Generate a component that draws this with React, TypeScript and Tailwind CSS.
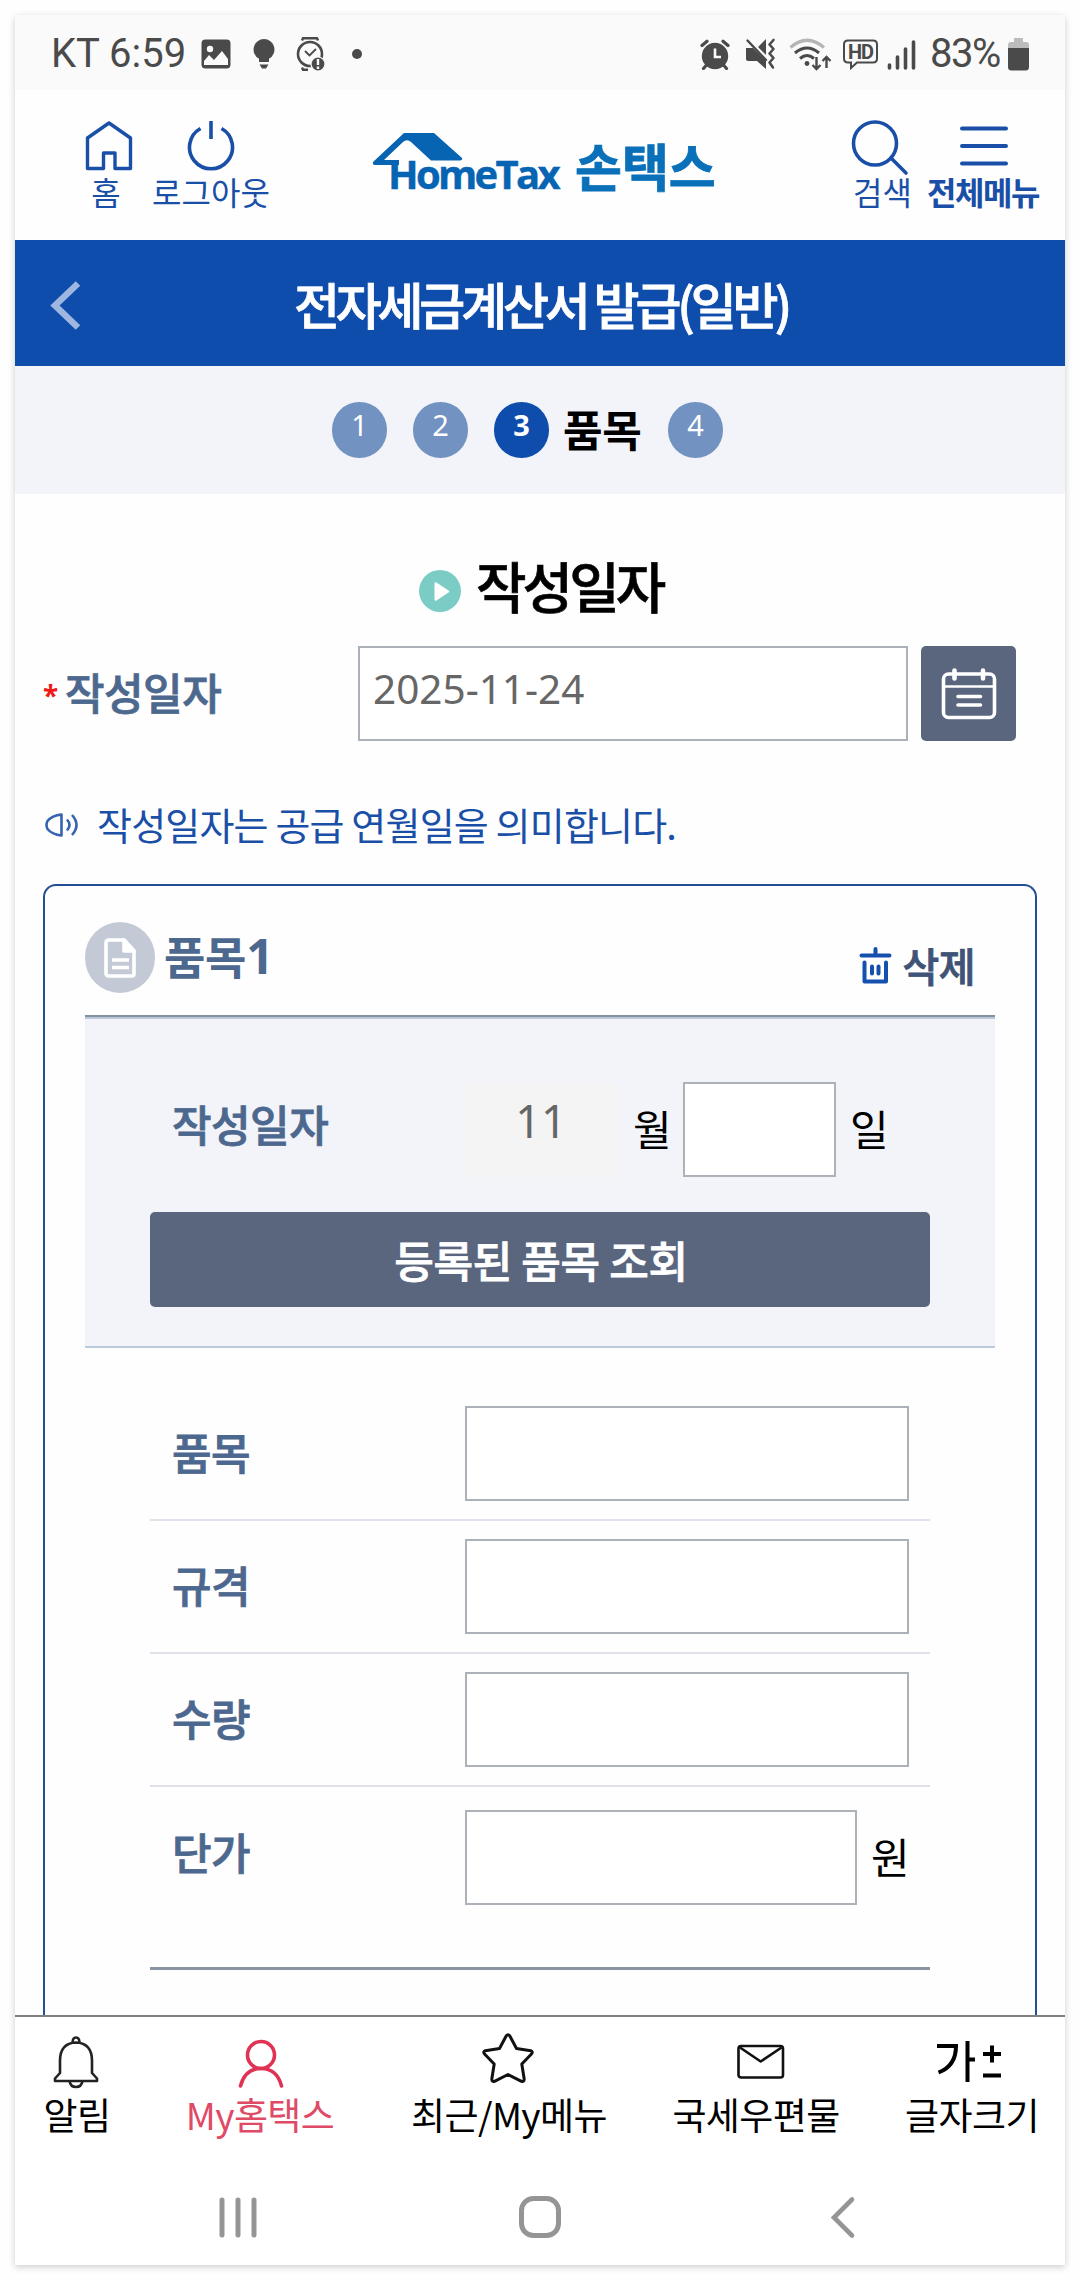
import { useState, type ReactNode } from 'react';

type IconProps = { className?: string };

const STEPS = [1, 2, 3, 4];
const CURRENT_STEP = 3;

function StatusBar() {
  return (
    <div className="flex h-[75px] shrink-0 items-center bg-[#fafafa] pl-[36px] pt-[3px] font-['Roboto',sans-serif] text-[40px] leading-none text-[#4a4a4a]">
      <span className="w-[150px] whitespace-nowrap">KT 6:59</span>
      {/* gallery, tip, watch */}
      <svg className="mr-[22px] h-[30px] w-[30px]" viewBox="0 0 30 30">
        <rect x="0.5" y="0.5" width="29" height="29" rx="4" fill="#4a4a4a" />
        <path d="M3 22l5-6 5 5 8-9 6 8v6H3z" fill="#fafafa" />
        <circle cx="9" cy="10" r="3.2" fill="#fafafa" />
      </svg>
      <svg className="mr-[21px] h-[32px] w-[22px]" viewBox="0 0 22 32" fill="#4a4a4a">
        <path d="M11 1a10.500 10.500 0 0 1 5 19.700V24H6v-3.300A10.500 10.500 0 0 1 11 1zM6.500 26.500h9L13 30.500H9z" />
      </svg>
      <svg className="mr-[26px] h-[34px] w-[30px]" viewBox="0 0 30 34" fill="none" stroke="#4a4a4a" strokeWidth="2.600">
        <circle cx="14" cy="17" r="12" />
        <path d="M9 14l4.500 4.500L20 12" strokeWidth="1.800" />
        <path d="M6 3.500L7 1.200h14l1 2.300M6 30.500l1 2.300h5" strokeWidth="2.400" />
        <circle cx="22" cy="27" r="7" fill="#4a4a4a" stroke="#fafafa" strokeWidth="1.200" />
        <path d="M22 22v6M22 29.500v2.500" stroke="#fafafa" strokeWidth="2.400" />
      </svg>
      <span className="h-[10px] w-[10px] rounded-full bg-[#4a4a4a]" />

      <svg className="ml-auto mr-[15px] h-[31px] w-[30px]" viewBox="0 0 30 31">
        <circle cx="15" cy="17" r="13.200" fill="#4a4a4a" />
        <path d="M2 6.500L7 2.200M28 6.500L23 2.200M6.500 26L3.500 29.500M23.500 26l3 3.500" stroke="#4a4a4a" strokeWidth="3.200" strokeLinecap="round" />
        <path d="M15 9.500V18h6" stroke="#fafafa" strokeWidth="2.600" fill="none" />
      </svg>
      <svg className="mr-[13px] h-[32px] w-[31px]" viewBox="0 0 31 32" fill="#4a4a4a">
        <path d="M1 10h7l13 13v8l-9-8H3q-2 0-2-2zM21 1v16l-8-8z" />
        <path d="M2.500 2.500L21 22" stroke="#4a4a4a" strokeWidth="2.400" strokeLinecap="round" />
        <path d="M28.500 2l-4 4.500 4 4.500-4 4.500 4 4.500-4 4.500 3.500 5" fill="none" stroke="#4a4a4a" strokeWidth="2.600" strokeLinejoin="round" strokeLinecap="round" />
      </svg>
      <svg className="mr-[11px] h-[34px] w-[43px]" viewBox="0 0 43 34" fill="none" strokeWidth="3">
        <path d="M1.500 10.500Q18-4 35 10.500" stroke="#b5b5b5" strokeWidth="3.200" />
        <path d="M6 16q12-10 24 0M11 21.500q7-6 14 0" stroke="#4a4a4a" />
        <circle cx="18" cy="26.500" r="2.400" fill="#4a4a4a" />
        <path d="M27.500 20v12M23.500 28l4 4 4-4M37.500 31V20M33.500 24l4-4 4 4" stroke="#4a4a4a" strokeWidth="2.400" />
      </svg>
      <div className="relative mr-[9px] h-[31px] w-[35px]">
        <svg className="h-[31px] w-[35px]" viewBox="0 0 35 31" fill="none" stroke="#4a4a4a" strokeWidth="2">
          <path d="M5 1.500h25q4 0 4 4v14q0 4-4 4H14l-6 5.500v-5.500H5q-4 0-4-4v-14q0-4 4-4z" />
        </svg>
        <span className="absolute inset-x-0 top-[2px] text-center text-[20px] font-bold leading-[22px] tracking-[-1px]">HD</span>
      </div>
      <svg className="mr-[14px] h-[31px] w-[29px]" viewBox="0 0 29 31" stroke="#4a4a4a" strokeWidth="3.600" strokeLinecap="round">
        <path d="M2.500 26v3M10.500 18v11M18.500 10v19M26.500 3v26" />
      </svg>
      <span className="mr-[6px] w-[72px] whitespace-nowrap tracking-[-1.500px]">83%</span>
      <svg className="mr-[36px] h-[34px] w-[21px]" viewBox="0 0 21 34">
        <path d="M6 1h9v4h3q3 0 3 3v5H0V8q0-3 3-3h3z" fill="#bcbcbc" />
        <path d="M0 11h21v19q0 3.500-3.500 3.500h-14Q0 33.500 0 30z" fill="#4a4a4a" />
      </svg>
    </div>
  );
}

function Header() {
  return (
    <header className="flex h-[150px] shrink-0 pt-[30px] text-[32px] leading-none text-[#1a4fa8]">
      <button className="ml-[65px] flex w-[58px] flex-col items-center">
        <svg className="h-[53px] w-[48px]" viewBox="0 0 48 53" fill="none" stroke="#1a4fa8" strokeWidth="3.400" strokeLinejoin="round">
          <path d="M2.500 18L24 3l21.500 15v30.500H30V33H18.500v15.500h-16z" />
        </svg>
        <span className="mr-[6px] mt-[2px]">홈</span>
      </button>
      <button className="ml-[13px] flex w-[120px] flex-col items-center">
        <svg className="h-[53px] w-[48px]" viewBox="0 0 48 53" fill="none" stroke="#1a4fa8" strokeWidth="3.600">
          <path d="M13.500 8.500a21.500 21.500 0 1 0 21 0M24 1v18" />
        </svg>
        <span className="mt-[2px] whitespace-nowrap">로그아웃</span>
      </button>

      {/* logo */}
      <div className="relative ml-[102px] mt-[12px] h-[66px] w-[344px]">
        <svg className="h-[34px] w-[92px]" viewBox="0 0 92 34">
          <path d="M0 30L31 1h30l28 25q1 2.500-2 2.500H58L38 10q-4-3.500-8 0L11 28h15v5H2q-3 0-2-3z" fill="#0764b2" />
        </svg>
        <span className="absolute left-[15px] top-[22px] font-['Open_Sans','Noto_Sans',sans-serif] text-[40px] font-bold leading-[40px] tracking-[-2.700px] text-[#0764b2] [-webkit-text-stroke:0.4px]">HomeTax</span>
        <span className="absolute left-[202px] top-[6px] whitespace-nowrap text-[51px] font-bold leading-[54px] text-[#0a70b9] [-webkit-text-stroke:0.8px]">손택스</span>
      </div>

      <button className="ml-[133px] flex w-[60px] flex-col items-center">
        <svg className="h-[56px] w-[58px]" viewBox="0 0 58 56" fill="none" stroke="#1a4fa8" strokeWidth="3.600" strokeLinecap="round">
          <circle cx="24" cy="23.500" r="21.500" />
          <path d="M40 38l15 15" />
        </svg>
        <span className="-mt-px ml-[5px] whitespace-nowrap">검색</span>
      </button>
      <button className="ml-[15px] flex w-[116px] flex-col items-center">
        <svg className="ml-[2px] h-[56px] w-[50px]" viewBox="0 0 50 56" stroke="#1a4fa8" strokeWidth="4" strokeLinecap="round">
          <path d="M3 8.500h44M3 26h44M3 43.500h44" />
        </svg>
        <span className="-mt-px whitespace-nowrap font-bold tracking-[-1.500px]">전체메뉴</span>
      </button>
    </header>
  );
}

function StepBar() {
  return (
    <ol className="flex h-[128px] shrink-0 items-center bg-[#f2f4f9] pl-[317px]">
      {STEPS.map((n) => (
        <li key={n} className="mr-[26px] flex items-center">
          <span
            className={`flex h-[56px] w-[55px] items-center justify-center rounded-full pb-[11px] font-['Noto_Sans',sans-serif] text-[29px] leading-none text-white ${n === CURRENT_STEP ? 'bg-[#0e4dac] font-bold' : 'bg-[#7292c2]'}`}
          >
            {n}
          </span>
          {n === CURRENT_STEP && (
            <span className="mb-[4px] ml-[14px] w-[79px] whitespace-nowrap text-[43px] font-bold leading-none tracking-[-0.400px] text-black">품목</span>
          )}
        </li>
      ))}
    </ol>
  );
}

function Field({ label, unit, last }: { label: string; unit?: string; last?: boolean }) {
  const [value, setValue] = useState('');
  return (
    <div className={last ? 'flex h-[183px] items-start border-b-[3px] border-[#8a94a3] pl-[22px] pt-[23px]' : 'flex h-[133px] items-start border-b-2 border-[#dfe2ea] pl-[22px] pt-[18px]'}>
      <span className={`w-[293px] text-[43px] font-medium leading-none tracking-[-0.500px] text-[#4d688e] [-webkit-text-stroke:0.8px] ${last ? 'mt-[20px]' : 'mt-[24px]'}`}>{label}</span>
      <input
        value={value}
        onChange={(e) => setValue(e.target.value)}
        className={`h-[95px] border-2 border-[#adb1b8] bg-white px-3 text-[41px] text-[#666] ${unit ? 'w-[392px]' : 'w-[444px]'}`}
      />
      {unit && <span className="ml-[14px] mt-[25px] text-[42px] leading-none text-black">{unit}</span>}
    </div>
  );
}

function ItemCard() {
  const [day, setDay] = useState('');
  return (
    <section className="mx-[28px] mt-[38px] flex-1 rounded-t-[13px] border-2 border-b-0 border-[#234f93] px-[40px]">
      <div className="flex h-[129px]">
        <span className="mt-[36px] flex h-[71px] w-[70px] items-center justify-center rounded-full bg-[#c4cad5]">
          <svg className="h-[40px] w-[32px]" viewBox="0 0 32 40" fill="none" stroke="white" strokeWidth="3.600" strokeLinejoin="round">
            <path d="M5 2h15l10 11v23q0 2-2 2H5q-3 0-3-2.500v-31Q2 2 5 2z" />
            <path d="M20 2v11h10z" fill="white" />
            <path d="M8 22h17M8 29.500h17" />
          </svg>
        </span>
        <h3 className="ml-[9px] mt-[47px] flex h-[45px] items-center whitespace-nowrap text-[45px] font-bold leading-none tracking-[-0.300px] text-[#4d688e]">
          품목<span className="font-['Noto_Sans',sans-serif] text-[48px] leading-none">1</span>
        </h3>
        <button className="ml-auto mr-[20px] mt-[58px] flex h-[42px] items-center text-[40px] font-medium leading-none tracking-[-0.500px] text-[#3f5376] [-webkit-text-stroke:0.8px]">
          <svg className="mr-[10px] h-[38px] w-[33px]" viewBox="0 0 33 38" fill="none" stroke="#1550ae" strokeWidth="4" strokeLinecap="round" strokeLinejoin="round">
            <path d="M2.500 9.500h28M16.500 3v6M5.500 16.500V35.500h21.500V16.500" />
            <path d="M13 20.500v7M19.500 20.500v7" />
          </svg>
          삭제
        </button>
      </div>

      <div className="border-t-2 border-[#84919f]">
        <div className="h-[331px] border-y-2 border-[#bac9dc] bg-[#f2f4fa] px-[65px]">
          <div className="flex h-[193px] items-start pl-[22px] pt-[63px]">
            <span className="mt-[20px] w-[293px] text-[43px] font-medium leading-none tracking-[-0.500px] text-[#4d688e] [-webkit-text-stroke:0.8px]">작성일자</span>
            <span className="flex h-[95px] w-[152px] items-center justify-center bg-[#f4f4f4] pb-[18px] font-['Noto_Sans',sans-serif] text-[45px] leading-none text-[#666]">11</span>
            <span className="ml-[16px] mt-[25px] w-[50px] text-[42px] leading-none text-black">월</span>
            <input
              value={day}
              onChange={(e) => setDay(e.target.value)}
              className="h-[95px] w-[153px] border-2 border-[#adb1b8] bg-white px-3 text-[41px] text-[#666]"
            />
            <span className="ml-[14px] mt-[25px] text-[42px] leading-none text-black">일</span>
          </div>
          <button className="flex h-[95px] w-full items-center justify-center rounded-[5px] bg-[#5a667e] pl-[2px] text-[43px] font-medium leading-none tracking-[-0.300px] text-white [-webkit-text-stroke:0.8px]">
            등록된 품목 조회
          </button>
        </div>
      </div>

      <div className="px-[65px] pt-[40px]">
        <Field label="품목" />
        <Field label="규격" />
        <Field label="수량" />
        <Field label="단가" unit="원" last />
      </div>
    </section>
  );
}

const BellIcon = ({ className }: IconProps) => (
  <svg className={className} viewBox="0 0 46 54" fill="none" stroke="#222" strokeWidth="2.600" strokeLinejoin="round">
    <path d="M7 26Q7 8 23 7.500 39 8 39 26v12l5 5.500v2.500H2v-2.500L7 38z" />
    <path d="M19.500 8q0-5.500 3.500-5.500T26.500 8M16.500 46q1 6 6.500 6t6.500-6" />
  </svg>
);

const PersonIcon = ({ className }: IconProps) => (
  <svg className={className} viewBox="0 0 46 54" fill="none" stroke="#e03354" strokeWidth="3.600" strokeLinecap="round">
    <circle cx="23" cy="20" r="13.500" />
    <path d="M2.500 51Q7 33.500 23 33.500T43.500 51" />
  </svg>
);

const StarIcon = ({ className }: IconProps) => (
  <svg className={className} viewBox="0 2 52 54" fill="none" stroke="#111" strokeWidth="3" strokeLinejoin="round">
    <path d="M24.300 2.800q1.700-2 3.400 0L34.500 15.500l14.200 2.200q2.500 1 1 3L39.800 31l2.400 15q0 3-2.700 2.300L26 41.500 12.500 48.300q-2.700.7-2.700-2.300l2.400-15L2.300 20.700q-1.500-2 1-3l14.200-2.200z" />
  </svg>
);

const MailIcon = ({ className }: IconProps) => (
  <svg className={className} viewBox="0 0 48 54" fill="none" stroke="#111" strokeWidth="2.600" strokeLinejoin="round">
    <rect x="1.500" y="11" width="44.500" height="31.500" rx="2.500" />
    <path d="M3 12.500l20.700 14L44.500 12.500" />
  </svg>
);

const FontSizeIcon = ({ className }: IconProps) => (
  <svg className={className} viewBox="0 0 66 54" fill="none" stroke="#000" strokeWidth="4">
    <path d="M1 11h19q0 20-17.500 26.500M31.500 6v41M31 24.500h8" />
    <path d="M47 19h18M56 10.500v17M47 40.500h18" />
  </svg>
);

function NavItem({ label, children, className }: { label: string; children: ReactNode; className: string }) {
  return (
    <button className={`flex flex-col items-center ${className}`}>
      {children}
      <span className="mt-[7px] whitespace-nowrap">{label}</span>
    </button>
  );
}

function BottomNav() {
  return (
    <nav className="flex h-[132px] shrink-0 border-t-2 border-[#808080] bg-white pt-[18px] text-[37px] leading-none tracking-[-0.600px] text-black">
      <NavItem label="알림" className="ml-[27px] w-[70px]"><BellIcon className="mr-[2px] h-[54px] w-[46px]" /></NavItem>
      <NavItem label="My홈택스" className="ml-[68px] w-[160px] text-[#df4a66]"><PersonIcon className="ml-[1px] h-[54px] w-[46px]" /></NavItem>
      <NavItem label="최근/My메뉴" className="ml-[69px] w-[200px]"><StarIcon className="mr-[3px] h-[54px] w-[52px] overflow-visible" /></NavItem>
      <NavItem label="국세우편물" className="ml-[61px] w-[172px]"><MailIcon className="ml-[9px] h-[54px] w-[48px]" /></NavItem>
      <NavItem label="글자크기" className="ml-[60px] w-[140px]"><FontSizeIcon className="mr-[6px] h-[54px] w-[66px]" /></NavItem>
    </nav>
  );
}

function SystemNav() {
  return (
    <div className="flex h-[118px] shrink-0 items-start bg-white pt-[48px]">
      <svg className="ml-[203px] h-[44px] w-[40px]" viewBox="0 0 40 44" stroke="#959595" strokeWidth="5" strokeLinecap="round">
        <path d="M4 5v35M20 5v35M36 5v35" />
      </svg>
      <svg className="ml-[260px] h-[44px] w-[44px]" viewBox="0 0 44 44" fill="none" stroke="#959595" strokeWidth="5">
        <rect x="3.500" y="3.500" width="37" height="37" rx="12" />
      </svg>
      <svg className="ml-[268px] h-[44px] w-[26px]" viewBox="0 0 26 44" fill="none" stroke="#959595" strokeWidth="4.600" strokeLinecap="round">
        <path d="M22 4.500L4 22.500 22 40.500" />
      </svg>
    </div>
  );
}

export default function App() {
  const [date, setDate] = useState('2025-11-24');

  return (
    <div className="h-[2280px] w-[1080px] bg-[#fefefe] p-[15px] font-['Noto_Sans_CJK_KR',sans-serif]">
      <div className="flex h-[2250px] w-[1050px] flex-col overflow-hidden rounded-t-[3px] bg-[#fefefe] shadow-[0_2px_7px_rgba(0,0,0,0.2)]">
        <StatusBar />
        <Header />

        {/* page title */}
        <div className="relative flex h-[126px] shrink-0 items-center justify-center bg-[#0e4dac]">
          <svg className="absolute left-[35px] top-[40px] h-[51px] w-[31px]" viewBox="0 0 31 51" fill="none" stroke="#9db7e0" strokeWidth="6.500">
            <path d="M28 3.500L5 25.500l23 22" />
          </svg>
          <h1 className="whitespace-nowrap pl-[2px] text-[50px] font-medium leading-none tracking-[-4.200px] text-white [-webkit-text-stroke:0.8px]">전자세금계산서 발급(일반)</h1>
        </div>

        <StepBar />

        <main className="flex min-h-0 flex-1 flex-col">
          <h2 className="flex h-[152px] shrink-0 items-center pl-[404px] pt-[29px] text-[55px] font-medium leading-none tracking-[-4px] text-black [-webkit-text-stroke:0.6px]">
            <svg className="mr-[15px] mt-[13px] h-[42px] w-[42px]" viewBox="0 0 42 42">
              <circle cx="21" cy="21" r="21" fill="#7cccc6" />
              <path d="M15.500 13.500v16q0 2 2 1l12-8q1.500-1 0-2l-12-8q-2-1-2 1z" fill="white" />
            </svg>
            작성일자
          </h2>

          <div className="flex h-[95px] shrink-0 items-center pl-[28px]">
            <span className="mt-[3px] w-[22px] font-['Noto_Sans',sans-serif] text-[28px] font-bold leading-none text-[#f01818]">*</span>
            <label className="mb-[4px] w-[293px] text-[43px] font-medium leading-none tracking-[-0.500px] text-[#4d688e] [-webkit-text-stroke:0.8px]">작성일자</label>
            <input
              value={date}
              onChange={(e) => setDate(e.target.value)}
              className="h-[95px] w-[550px] border-2 border-[#abb0b9] bg-white pb-[10px] pl-[13px] font-['Noto_Sans',sans-serif] text-[40.500px] text-[#666]"
            />
            <button className="ml-[13px] flex h-[95px] w-[95px] items-center justify-center rounded-[5px] bg-[#5a667e]">
              <svg className="h-[54px] w-[56px]" viewBox="0 1 56 54" fill="none" stroke="white" strokeWidth="3.600" strokeLinecap="round">
                <rect x="2.500" y="8" width="51" height="43.500" rx="5" />
                <path d="M3 20.500h50" strokeWidth="2.600" strokeLinecap="butt" />
                <path d="M13.500 4.500v8M42 4.500v8" strokeWidth="4.600" />
                <path d="M17 30.500h22.500M17 39h22.500" />
              </svg>
            </button>
          </div>

          <p className="mt-[60px] flex h-[45px] shrink-0 items-center whitespace-nowrap pl-[30px] text-[38px] leading-none tracking-[-0.820px] text-[#1a4fa8]">
            <svg className="mr-[17px] mt-[2px] h-[24px] w-[35px]" viewBox="0 0 35 24" fill="none" stroke="#3563b0" strokeWidth="2.600" strokeLinejoin="round">
              <path d="M16.500 1.500v21Q7 21.500 2.500 16q-2-4 0-8 4.500-5.500 14-6.500z" />
              <path d="M22 6.500q5 5.500 0 11M27 2q9 10 0 20" />
            </svg>
            작성일자는 공급 연월일을 의미합니다.
          </p>

          <ItemCard />
        </main>

        <BottomNav />
        <SystemNav />
      </div>
    </div>
  );
}
